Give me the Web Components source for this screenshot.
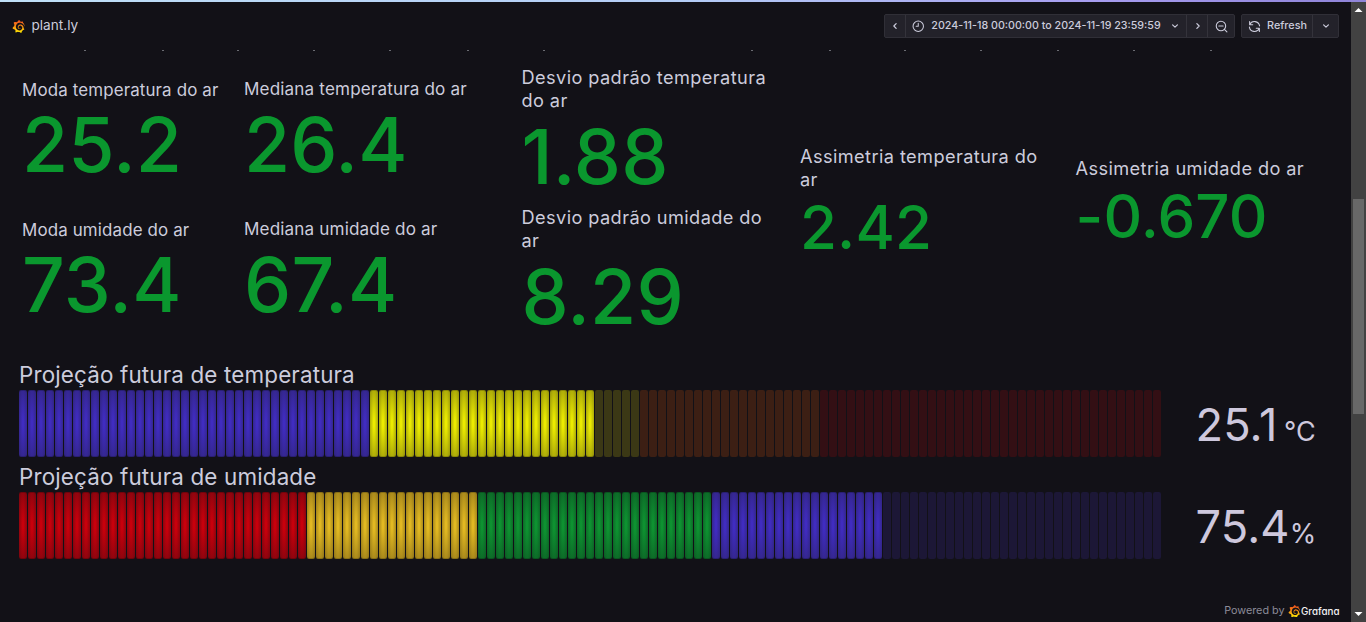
<!DOCTYPE html>
<html lang="pt">
<head>
<meta charset="utf-8">
<title>plant.ly</title>
<style>
  html, body { margin: 0; height: 100%; background: #121117; overflow: hidden; }
  body { font-family: Inter, "Liberation Sans", sans-serif; color: #ccccdc; }
</style>
</head>
<body>
<plant-dashboard></plant-dashboard>
<script>
const GRAFANA = 'M23.02 10.59a8.578 8.578 0 0 0-.862-3.034 8.911 8.911 0 0 0-1.789-2.445c.337-1.342-.413-2.505-.413-2.505-1.292-.08-2.113.4-2.416.62-.052-.02-.102-.044-.154-.064-.22-.089-.446-.172-.677-.247-.231-.073-.47-.14-.711-.197a9.867 9.867 0 0 0-.875-.161C14.557.753 12.94 0 12.94 0c-1.804 1.145-2.147 2.744-2.147 2.744l-.018.093c-.098.029-.2.057-.298.088-.138.042-.275.094-.413.143-.138.055-.275.107-.41.166a8.869 8.869 0 0 0-1.557.87l-.063-.029c-2.497-.955-4.716.195-4.716.195-.203 2.658.996 4.33 1.235 4.636a11.608 11.608 0 0 0-.607 2.635C1.636 12.677.953 15.014.953 15.014c1.926 2.214 4.171 2.351 4.171 2.351.003-.002.006-.002.006-.005.285.509.615.994.986 1.446.156.19.32.371.488.548-.704 2.009.099 3.68.099 3.68 2.144.08 3.553-.937 3.849-1.173a9.784 9.784 0 0 0 3.164.501h.08l.055-.003.107-.002.103-.005.003.002c1.01 1.44 2.788 1.646 2.788 1.646 1.264-1.332 1.337-2.653 1.337-2.94v-.058c0-.02-.003-.039-.003-.06.265-.187.52-.387.758-.6a7.875 7.875 0 0 0 1.415-1.7c1.43.083 2.437-.885 2.437-.885-.236-1.49-1.085-2.216-1.264-2.354l-.018-.013-.016-.013a.217.217 0 0 1-.031-.02c.008-.092.016-.18.02-.27.011-.162.016-.323.016-.48v-.253l-.005-.098-.008-.135a1.891 1.891 0 0 0-.01-.13c-.003-.042-.008-.083-.013-.125l-.016-.124-.018-.122a6.215 6.215 0 0 0-2.032-3.73 6.015 6.015 0 0 0-3.222-1.46 6.292 6.292 0 0 0-.85-.048l-.107.002h-.063l-.044.003-.104.008a4.777 4.777 0 0 0-3.335 1.695c-.332.4-.592.84-.768 1.297a4.594 4.594 0 0 0-.312 1.817l.003.091c.005.055.007.11.013.164a3.615 3.615 0 0 0 .698 1.82 3.53 3.53 0 0 0 1.827 1.282c.33.098.66.14.971.137.039 0 .078 0 .114-.002l.063-.003c.02 0 .041-.003.062-.003.034-.002.065-.007.099-.01.007 0 .018-.003.028-.003l.031-.005.06-.008a1.18 1.18 0 0 0 .112-.02c.036-.008.072-.013.109-.024a2.634 2.634 0 0 0 .914-.415c.028-.02.056-.041.085-.065a.248.248 0 0 0 .039-.35.244.244 0 0 0-.309-.06l-.078.042c-.09.044-.184.083-.283.116a2.476 2.476 0 0 1-.475.096c-.028.003-.054.006-.083.006l-.083.002c-.026 0-.054 0-.08-.002l-.102-.006h-.012l-.024.006c-.016-.003-.031-.003-.044-.006-.031-.002-.06-.007-.091-.01a2.59 2.59 0 0 1-.724-.213 2.557 2.557 0 0 1-.667-.438 2.52 2.52 0 0 1-.805-1.475 2.306 2.306 0 0 1-.029-.444l.006-.122v-.023l.002-.031c.003-.021.003-.04.005-.06a3.163 3.163 0 0 1 1.352-2.29 3.12 3.12 0 0 1 .937-.43 2.946 2.946 0 0 1 .776-.101h.06l.07.002.045.003h.026l.07.005a4.041 4.041 0 0 1 1.635.49 3.94 3.94 0 0 1 1.602 1.662 3.77 3.77 0 0 1 .397 1.414l.005.076.003.075c.002.026.002.05.002.075 0 .024.003.052 0 .07v.065l-.002.073-.008.174a6.195 6.195 0 0 1-.08.639 5.1 5.1 0 0 1-.267.927 5.31 5.31 0 0 1-.624 1.13 5.052 5.052 0 0 1-3.237 2.014 4.82 4.82 0 0 1-.649.066l-.039.003h-.287a6.607 6.607 0 0 1-1.716-.265 6.776 6.776 0 0 1-3.4-2.274 6.75 6.75 0 0 1-.746-1.15 6.616 6.616 0 0 1-.714-2.596l-.005-.083-.002-.02v-.056l-.003-.073v-.096l-.003-.104v-.07l.003-.163c.008-.22.026-.45.054-.678a8.707 8.707 0 0 1 .28-1.355c.128-.444.286-.872.473-1.277a7.04 7.04 0 0 1 1.456-2.1 5.925 5.925 0 0 1 .953-.763c.169-.111.343-.213.524-.306.089-.05.182-.091.273-.135.047-.02.093-.042.138-.062a7.177 7.177 0 0 1 .714-.267l.145-.045c.049-.015.098-.026.148-.041.098-.029.197-.052.296-.076.049-.013.1-.02.15-.033l.15-.032.151-.028.076-.013.075-.01.153-.024c.057-.01.114-.013.171-.023l.169-.021c.036-.003.073-.008.106-.01l.073-.008.036-.003.042-.002c.057-.003.114-.008.171-.01l.086-.006h.023l.037-.003.145-.007a7.999 7.999 0 0 1 1.708.125 7.917 7.917 0 0 1 2.048.68 8.253 8.253 0 0 1 1.672 1.09l.09.077.089.078c.06.052.114.107.171.159.057.052.112.106.166.16.052.055.107.107.159.164a8.671 8.671 0 0 1 1.41 1.978c.012.026.028.052.04.078l.04.078.075.156c.023.051.05.1.07.153l.065.15a8.848 8.848 0 0 1 .45 1.34.19.19 0 0 0 .201.142.186.186 0 0 0 .172-.184c.01-.246.002-.532-.024-.856z';

const ICONS = {
  left: '<path d="M14.3 7.2 9.7 12l4.6 4.8"/>',
  right: '<path d="M9.7 7.2 14.3 12l-4.6 4.8"/>',
  down: '<path d="M7.2 9.7 12 14.3l4.8-4.6"/>',
  clock: '<circle cx="12" cy="12" r="10"/><path d="M12 6.5V12H8"/>',
  zoomout: '<circle cx="11" cy="11" r="8.7"/><path d="M7 11h8M17.3 17.3 22 22"/>',
  sync: '<path d="M3.2 8.5A9.6 9.6 0 0 1 21.4 11M20.8 15.5A9.6 9.6 0 0 1 2.6 13M3 3v5.7h5.7M21 21v-5.7h-5.7"/>'
};

function define(name, html, setup) {
  const tpl = document.createElement('template');
  tpl.innerHTML = html;
  customElements.define(name, class extends HTMLElement {
    constructor() {
      super();
      this.attachShadow({ mode: 'open' }).append(tpl.content.cloneNode(true));
    }
    connectedCallback() { if (setup) setup(this, this.shadowRoot); }
  });
}

define('line-icon', `<style>
  :host { display: block; flex: none; width: var(--size, 13px); height: var(--size, 13px); }
  svg { display: block; width: 100%; height: 100%; fill: none; stroke: currentColor;
        stroke-width: var(--stroke, 2); stroke-linecap: round; stroke-linejoin: round; }
</style><svg viewBox="0 0 24 24"></svg>`,
(el, root) => { root.querySelector('svg').innerHTML = ICONS[el.getAttribute('name')]; });

define('grafana-logo', `<style>
  :host { display: block; flex: none; width: var(--size, 13px); height: var(--size, 13px); }
  svg { display: block; width: 100%; height: 100%; }
</style><svg viewBox="0 0 24 24"><defs><linearGradient id="g" x1="0" y1="1" x2="0" y2="0">
  <stop offset="0" stop-color="#fff100"/><stop offset=".45" stop-color="#fb9a10"/><stop offset="1" stop-color="#f04a20"/>
</linearGradient></defs><path fill="url(#g)" d="${GRAFANA}"/></svg>`);

define('tool-group', `<style>
  :host { display: flex; box-sizing: border-box; height: 24px; background: #23222a;
          border: 1px solid #302f37; border-radius: 2px; }
</style><slot></slot>`);

define('tool-button', `<style>
  :host { display: flex; box-sizing: border-box; align-items: center; justify-content: center; height: 22px;
          font-size: 10.7px; font-weight: 500; white-space: nowrap; color: #ccccdc; }
  :host(:not(:last-child)) { border-right: 1px solid #34333b; }
</style><slot></slot>`);

define('app-header', `<style>
  :host { display: flex; align-items: center; justify-content: space-between; height: 48px;
          box-sizing: border-box; padding: 0 12px 0 12px; }
  .brand, .tools { display: flex; align-items: center; }
  .brand { gap: 6.5px; font-size: 13.6px; line-height: 20px; }
  .brand span, tool-button span { padding-bottom: 2px; }
  .tools { gap: 6px; }
  .prev { width: 21px; } .next { width: 22px; } .zoom { width: 26px; } .more { width: 25px; }
  .range { width: 281px; padding-left: 1px; }
  .prev { padding-right: 1px; }
  .next { width: 21px; padding-left: 1px; }
  .range span { margin: 0 8px 0 6.5px; }
  .refresh { width: 71px; gap: 6px; font-size: 10.8px; padding-left: 1px; }
  .chev { --size: 12px; --stroke: 2.4; }
</style>
<div class="brand"><grafana-logo></grafana-logo><span>plant.ly</span></div>
<div class="tools">
  <tool-group>
    <tool-button class="prev"><line-icon class="chev" name="left"></line-icon></tool-button>
    <tool-button class="range"><line-icon name="clock" style="--size:12.5px"></line-icon><span>2024-11-18 00:00:00 to 2024-11-19 23:59:59</span><line-icon class="chev" name="down"></line-icon></tool-button>
    <tool-button class="next"><line-icon class="chev" name="right"></line-icon></tool-button>
    <tool-button class="zoom"><line-icon name="zoomout"></line-icon></tool-button>
  </tool-group>
  <tool-group>
    <tool-button class="refresh"><line-icon name="sync"></line-icon><span>Refresh</span></tool-button>
    <tool-button class="more"><line-icon class="chev" name="down"></line-icon></tool-button>
  </tool-group>
</div>`);

define('axis-remnants', `<style>
  :host { display: block; height: 7px; }
  svg { display: block; }
</style><svg width="1351" height="7"></svg>`,
(el, root) => {
  root.querySelector('svg').innerHTML = [84, 162, 237, 313, 389, 467, 543, 751, 829, 904, 980, 1057, 1133, 1210]
    .map(x => `<rect x="${x}" y="0" width="2" height="1" fill="#6a6b72"/>`).join('');
});

define('stat-tile', `<style>
  :host { display: flex; flex-direction: column; box-sizing: border-box; letter-spacing: .15px;
          padding-top: var(--top); }
  .title { font-size: var(--title, 17px); line-height: 23px; color: #ccccdc; letter-spacing: var(--track, .15px); white-space: nowrap; }
  .value { font-size: var(--value, 75px); line-height: var(--line, 88px); font-weight: 500; color: #0a972e;
           margin-top: var(--gap, 0px); white-space: nowrap; }
</style><div class="title"><slot></slot></div><div class="value"></div>`,
(el, root) => { root.querySelector('.value').textContent = el.getAttribute('value'); });

define('stat-grid', `<style>
  :host { display: grid; grid-template-columns: 222px 277.5px 278.5px 275.5px 260px; grid-template-rows: 140px 140px;
          grid-auto-flow: column; padding-left: 22px; }
</style><slot></slot>`);

define('led-gauge', `<style>
  :host { display: grid; grid-template-columns: 1142px 1fr; grid-template-rows: 29.5px 67.4px; height: 102px; letter-spacing: .15px; }
  .title { grid-column: 1 / 3; font-size: 22.42px; line-height: 27px; white-space: nowrap; }
  .cells { display: grid; grid-template-columns: repeat(127, 8px); column-gap: 1px; }
  .cells i { border-radius: 2px; background: var(--dim); }
  .cells i.lit { background: radial-gradient(var(--in) 10%, var(--out)); box-shadow: inset 0 1px rgba(0,0,0,.2), inset 0 -1px rgba(0,0,0,.2); }
  .reading { display: flex; align-items: baseline; padding-left: 34.5px; font-size: 45.2px; line-height: 69px; color: #cec8dd; }
  .unit { font-size: 27px; margin-left: var(--unit-gap); }
</style>
<div class="title"><slot></slot></div><div class="cells"></div>
<div class="reading"><span class="num"></span><span class="unit"></span></div>`,
(el, root) => {
  const cells = root.querySelector('.cells');
  for (const part of el.getAttribute('bands').split(';')) {
    const [count, inner, outer] = part.trim().split(' ');
    for (let i = 0; i < +count; i++) {
      const cell = document.createElement('i');
      if (outer) {
        cell.className = 'lit';
        cell.style.setProperty('--in', inner);
        cell.style.setProperty('--out', outer);
      } else cell.style.setProperty('--dim', inner);
      cells.append(cell);
    }
  }
  root.querySelector('.num').textContent = el.getAttribute('value');
  root.querySelector('.unit').textContent = el.getAttribute('unit');
});

define('powered-by', `<style>
  :host { display: flex; align-items: center; justify-content: flex-end; gap: 1px; padding-right: 11.5px;
          font-size: 10.8px; line-height: 14px; color: #8d8c99; }
  .by { margin-right: 2px; }
  .name { color: #f2f2f4; font-size: 9.8px; font-weight: 500; font-feature-settings: "cv11"; line-height: 14px; padding-top: 2px; }
  grafana-logo { --size: 12.5px; margin-top: 1px; }
</style><span class="by">Powered by</span><grafana-logo></grafana-logo><span class="name">Grafana</span>`);

define('scroll-rail', `<style>
  :host { display: flex; flex-direction: column; align-items: center; width: 15px; background: #424242; }
  svg { display: block; }
  .track { flex: 1; width: 11px; box-sizing: border-box; padding-top: 182px; }
  .thumb { height: 215px; background: #686868; }
</style>
<svg width="15" height="15"><path d="M3.5 10h8L7.5 6z" fill="#fff"/></svg>
<div class="track"><div class="thumb"></div></div>
<svg width="15" height="15"><path d="M3.5 5h8L7.5 9z" fill="#fff"/></svg>`);

define('plant-dashboard', `<style>
  :host { display: grid; grid-template: 2px 620px / 1351px 15px; width: 1366px; height: 622px; }
  .edge { grid-column: 1 / 3; background: linear-gradient(90deg, #bfe0f7, #b4cdf6 50%, #a79df0 80%, #8f84d8); }
  main { display: flex; flex-direction: column; min-width: 0; }
  .wide { --title: 18.2px; --track: .4px; }
  .skew { grid-row: 1 / 3; --value: 60px; --line: 72px; }
  .gauges { padding: 23.5px 0 0 19px; height: 227.5px; box-sizing: border-box; }
  powered-by { margin-top: 38px; }
</style>
<div class="edge"></div>
<main>
  <app-header></app-header>
  <axis-remnants></axis-remnants>
  <stat-grid>
    <stat-tile value="25.2" style="--top:22px;--gap:-1px;--title:16.9px">Moda temperatura do ar</stat-tile>
    <stat-tile value="73.4" style="--top:22px;--gap:-1px;--title:16.9px">Moda umidade do ar</stat-tile>
    <stat-tile value="26.4" style="--top:20px;--gap:1px;--title:17.1px">Mediana temperatura do ar</stat-tile>
    <stat-tile value="67.4" style="--top:20px;--gap:1px;--title:17.1px">Mediana umidade do ar</stat-tile>
    <stat-tile class="wide" value="1.88" style="--top:9px;--gap:1px">Desvio padrão temperatura<br>do ar</stat-tile>
    <stat-tile class="wide" value="8.29" style="--top:9px;--gap:1px">Desvio padrão umidade do<br>ar</stat-tile>
    <stat-tile class="wide skew" value="2.42" style="--top:88px">Assimetria temperatura do<br>ar</stat-tile>
    <stat-tile class="wide skew" value="-0.670" style="--top:100px">Assimetria umidade do ar</stat-tile>
  </stat-grid>
  <div class="gauges">
    <led-gauge value="25.1" unit="°C" style="--unit-gap:6.5px"
      bands="39 #402cc0 #2f247a; 25 #eceb00 #908e0c; 5 #3b3815; 20 #3c1f14; 38 #330f14">Projeção futura de temperatura</led-gauge>
    <led-gauge value="75.4" unit="%" style="--unit-gap:0px"
      bands="32 #c8000c #75060f; 19 #e2b922 #8f7318; 26 #0e9231 #0c5a24; 19 #402cc0 #2f247a; 31 #1c1736">Projeção futura de umidade</led-gauge>
  </div>
  <powered-by></powered-by>
</main>
<scroll-rail></scroll-rail>`);
</script>
</body>
</html>
